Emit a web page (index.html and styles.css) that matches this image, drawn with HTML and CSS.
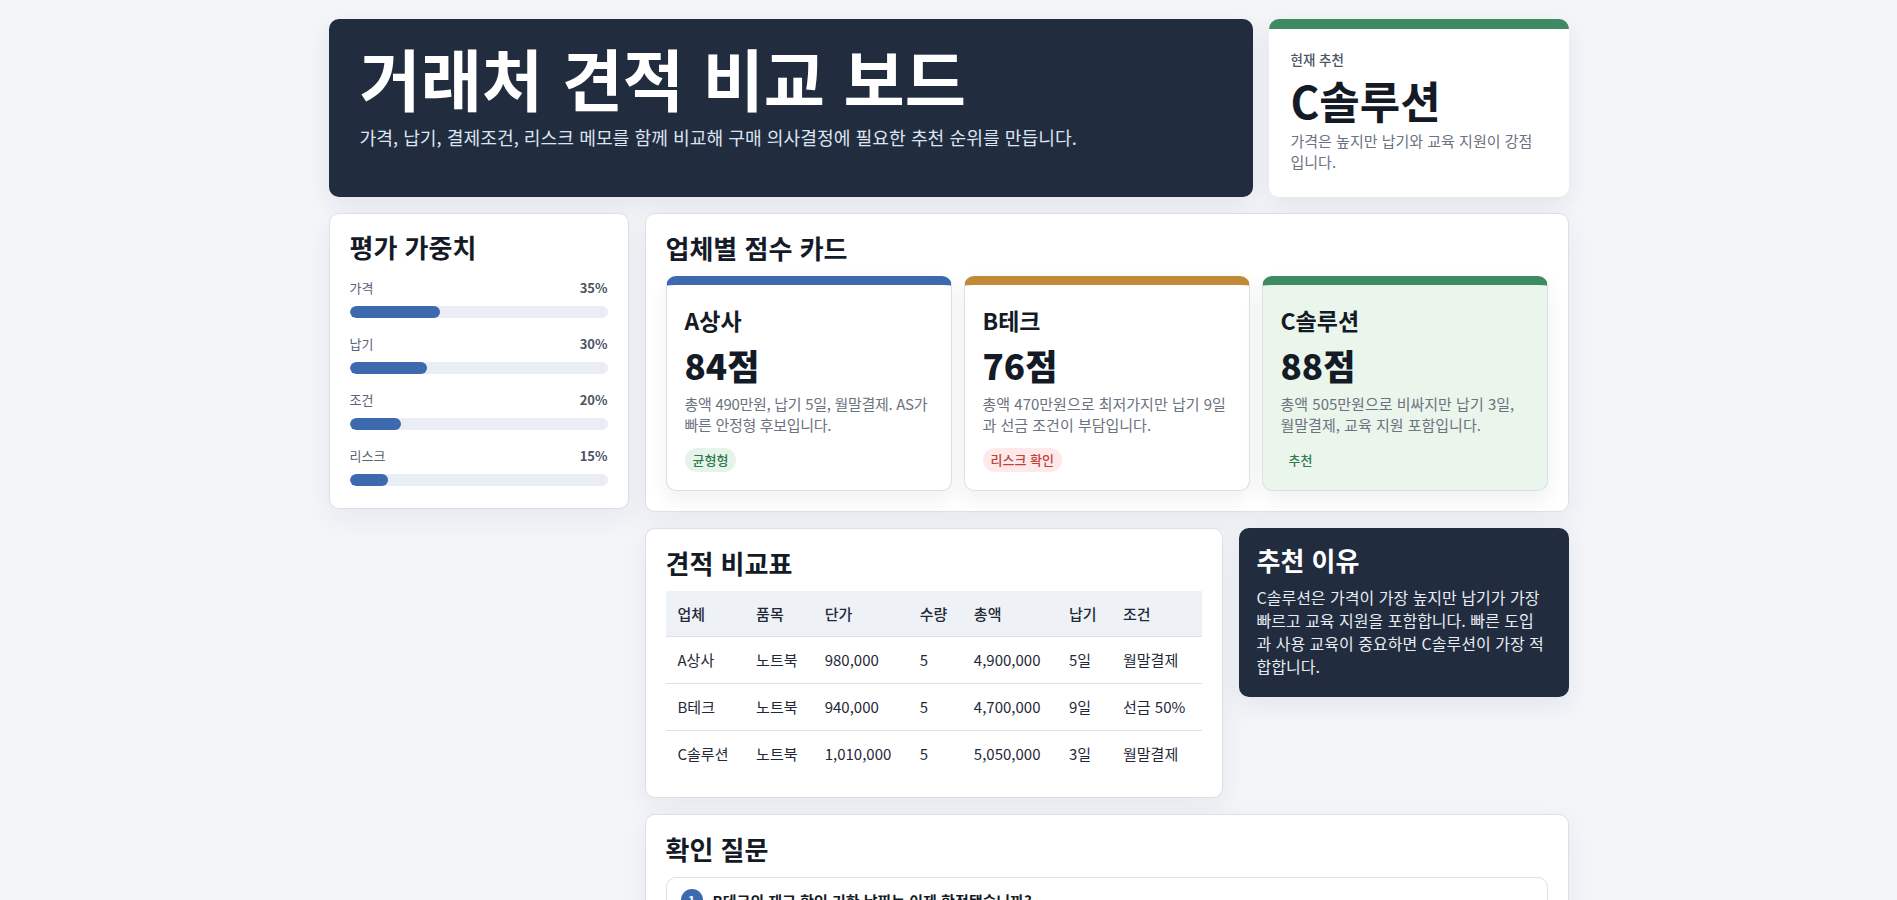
FILE: index.html
```html
<!DOCTYPE html>
<html lang="ko">
<head>
  <meta charset="UTF-8">
  <meta name="viewport" content="width=device-width, initial-scale=1.0">
  <title>거래처 견적 비교 보드</title>
  <link rel="stylesheet" href="styles.css">
</head>
<body>
  <div class="page">

    <div class="top">
      <header class="hero">
        <h1>거래처 견적 비교 보드</h1>
        <p>가격, 납기, 결제조건, 리스크 메모를 함께 비교해 구매 의사결정에 필요한 추천 순위를 만듭니다.</p>
      </header>

      <aside class="pick">
        <span class="pick-label">현재 추천</span>
        <strong class="pick-name">C솔루션</strong>
        <p>가격은 높지만 납기와 교육 지원이 강점입니다.</p>
      </aside>
    </div>

    <div class="layout">
      <aside class="panel weights">
        <h2>평가 가중치</h2>
        <div class="weight">
          <div class="weight-head"><span>가격</span><b>35%</b></div>
          <div class="bar"><span style="width: 35%"></span></div>
        </div>
        <div class="weight">
          <div class="weight-head"><span>납기</span><b>30%</b></div>
          <div class="bar"><span style="width: 30%"></span></div>
        </div>
        <div class="weight">
          <div class="weight-head"><span>조건</span><b>20%</b></div>
          <div class="bar"><span style="width: 20%"></span></div>
        </div>
        <div class="weight">
          <div class="weight-head"><span>리스크</span><b>15%</b></div>
          <div class="bar"><span style="width: 15%"></span></div>
        </div>
      </aside>

      <main class="main">
        <section class="panel scores">
          <h2>업체별 점수 카드</h2>
          <div class="score-grid">
            <div class="score-card blue">
              <h3>A상사</h3>
              <div class="score">84점</div>
              <p class="tight">총액 490만원, 납기 5일, 월말결제. AS가 빠른 안정형 후보입니다.</p>
              <span class="tag tag-green">균형형</span>
            </div>
            <div class="score-card amber">
              <h3>B테크</h3>
              <div class="score">76점</div>
              <p>총액 470만원으로 최저가지만 납기 9일과 선금 조건이 부담입니다.</p>
              <span class="tag tag-red">리스크 확인</span>
            </div>
            <div class="score-card green best">
              <h3>C솔루션</h3>
              <div class="score">88점</div>
              <p>총액 505만원으로 비싸지만 납기 3일, 월말결제, 교육 지원 포함입니다.</p>
              <span class="tag tag-green">추천</span>
            </div>
          </div>
        </section>

        <div class="split">
          <section class="panel quote">
            <h2>견적 비교표</h2>
            <table>
              <thead>
                <tr><th>업체</th><th>품목</th><th>단가</th><th>수량</th><th>총액</th><th>납기</th><th>조건</th></tr>
              </thead>
              <tbody>
                <tr><td>A상사</td><td>노트북</td><td>980,000</td><td>5</td><td>4,900,000</td><td>5일</td><td>월말결제</td></tr>
                <tr><td>B테크</td><td>노트북</td><td>940,000</td><td>5</td><td>4,700,000</td><td>9일</td><td>선금 50%</td></tr>
                <tr><td>C솔루션</td><td>노트북</td><td>1,010,000</td><td>5</td><td>5,050,000</td><td>3일</td><td>월말결제</td></tr>
              </tbody>
            </table>
          </section>

          <section class="reason">
            <h2>추천 이유</h2>
            <p>C솔루션은 가격이 가장 높지만 납기가 가장 빠르고 교육 지원을 포함합니다. 빠른 도입과 사용 교육이 중요하면 C솔루션이 가장 적합합니다.</p>
          </section>
        </div>

        <section class="panel questions">
          <h2>확인 질문</h2>
          <ol class="question-list">
            <li><span class="num">1</span>B테크의 재고 확인 기한 날짜는 이제 확정됐습니까?</li>
            <li><span class="num">2</span>C솔루션의 교육 지원은 몇 회까지 포함됩니까?</li>
            <li><span class="num">3</span>A상사의 AS 응답 시간은 계약서에 명시됩니까?</li>
          </ol>
        </section>
      </main>
    </div>

  </div>
</body>
</html>
```

FILE: styles.css
```css
/* Reset */
* {
  margin: 0;
  padding: 0;
  box-sizing: border-box;
}

:root {
  --ink: #141b27;
  --muted: #6b7280;
  --line: #dbe0e8;
  --navy: #222c3f;
  --blue: #3d6aae;
  --amber: #c08a37;
  --green: #3e8a63;
}

body {
  font-family: "Noto Sans CJK KR", "Noto Sans", sans-serif;
  background: #f3f5f9;
  color: var(--ink);
}

.page {
  max-width: 1240px;
  margin: 0 auto;
  padding: 19px 0 40px;
}

/* Top row */
.top {
  display: grid;
  grid-template-columns: 1fr 300px;
  gap: 16px;
}

.hero {
  background: var(--navy);
  color: white;
  border-radius: 10px;
  padding: 21px 31px;
  box-shadow: 0 8px 24px rgba(31, 41, 55, 0.08);
  min-height: 178px;
}

.hero h1 {
  font-size: 66.5px;
  font-weight: 700;
  line-height: 75px;
}

.hero p {
  font-size: 18.2px;
  line-height: 27px;
  color: #dce4f0;
  margin-top: 9px;
}

.pick {
  background: white;
  border-radius: 10px;
  border-top: 10px solid var(--green);
  padding: 21px 24px 20px 22px;
  box-shadow: 0 8px 24px rgba(31, 41, 55, 0.08);
}

.pick-label {
  display: block;
  font-size: 13.5px;
  font-weight: 500;
  color: #4b5563;
  line-height: 19px;
}

.pick-name {
  display: block;
  font-size: 44px;
  font-weight: 700;
  line-height: 48px;
  margin-top: 7px;
}

.pick p {
  font-size: 15px;
  line-height: 21px;
  color: var(--muted);
  margin-top: 6px;
}

/* Body layout */
.layout {
  display: grid;
  grid-template-columns: 300px 1fr;
  gap: 16px;
  margin-top: 16px;
  align-items: start;
}

.main {
  display: flex;
  flex-direction: column;
  gap: 16px;
}

.panel {
  background: white;
  border: 1px solid var(--line);
  border-radius: 10px;
  padding: 20px;
  box-shadow: 0 10px 30px rgba(31, 41, 55, 0.06);
}

.panel h2 {
  font-size: 26px;
  font-weight: 700;
  line-height: 28px;
  margin-bottom: 14px;
}

/* Weights */
.weights {
  padding: 19px 20px 22px;
}

.weights h2 {
  margin-bottom: 18px;
}

.weight + .weight {
  margin-top: 17px;
}

.weight-head {
  display: flex;
  justify-content: space-between;
  font-size: 13px;
  line-height: 18px;
  color: #5b6474;
  margin-bottom: 9px;
}

.weight-head b {
  color: #4b5563;
}

.bar {
  height: 12px;
  border-radius: 6px;
  background: #eaeef4;
  overflow: hidden;
}

.bar span {
  display: block;
  height: 100%;
  border-radius: 6px;
  background: var(--blue);
}

/* Score cards */
.score-grid {
  display: grid;
  grid-template-columns: repeat(3, 1fr);
  gap: 12px;
}

.score-card {
  background: white;
  border: 1px solid var(--line);
  border-top: 9px solid var(--blue);
  border-radius: 10px;
  padding: 20px 18px 18px;
  box-shadow: 0 8px 20px rgba(31, 41, 55, 0.07);
}

.score-card.amber {
  border-top-color: var(--amber);
}

.score-card.green {
  border-top-color: var(--green);
}

.score-card.best {
  background: #eaf5ec;
}

.score-card h3 {
  font-size: 23px;
  font-weight: 700;
  line-height: 30px;
}

.score {
  font-size: 35px;
  font-weight: 800;
  line-height: 42px;
  margin-top: 9px;
}

.score-card p {
  font-size: 15px;
  line-height: 21px;
  color: var(--muted);
  margin-top: 7px;
}

.score-card p.tight {
  letter-spacing: -0.3px;
}

.tag {
  display: inline-block;
  margin-top: 13px;
  padding: 0 8px;
  height: 24px;
  line-height: 24px;
  border-radius: 12px;
  font-size: 13px;
  font-weight: 500;
}

.tag-green {
  background: #e6f3e9;
  color: #2f7a4f;
}

.tag-red {
  background: #fde9e9;
  color: #c2413b;
}

.best .tag-green {
  background: transparent;
}

/* Quote table */
.split {
  display: grid;
  grid-template-columns: 1fr 330px;
  gap: 16px;
  align-items: start;
}

.quote h2 {
  margin-bottom: 14px;
}

table {
  width: 100%;
  border-collapse: collapse;
  font-size: 15px;
}

th,
td {
  text-align: left;
  padding: 0 12px;
  white-space: nowrap;
}

th {
  height: 45px;
  background: #eef2f7;
  font-weight: 500;
  color: #1f2937;
  border-bottom: 1px solid var(--line);
}

td {
  height: 47px;
  color: #1f2937;
}

tbody tr + tr td {
  border-top: 1px solid var(--line);
}

/* Reason */
.reason {
  background: var(--navy);
  color: white;
  border-radius: 10px;
  padding: 18px 21px 18px 18px;
  box-shadow: 0 8px 24px rgba(31, 41, 55, 0.08);
}

.reason h2 {
  font-size: 26px;
  line-height: 28px;
  font-weight: 700;
}

.reason p {
  font-size: 16px;
  line-height: 23.3px;
  color: #e8ecf2;
  margin-top: 11.5px;
}

/* Questions */
.question-list {
  list-style: none;
  display: flex;
  flex-direction: column;
  gap: 10px;
}

.question-list li {
  display: flex;
  align-items: center;
  gap: 10px;
  border: 1px solid var(--line);
  border-radius: 10px;
  padding: 11px 14px;
  font-size: 15px;
  font-weight: 600;
}

.num {
  flex: none;
  width: 22px;
  height: 22px;
  border-radius: 50%;
  background: var(--blue);
  color: white;
  font-size: 12px;
  font-weight: 700;
  text-align: center;
  line-height: 22px;
}
```
